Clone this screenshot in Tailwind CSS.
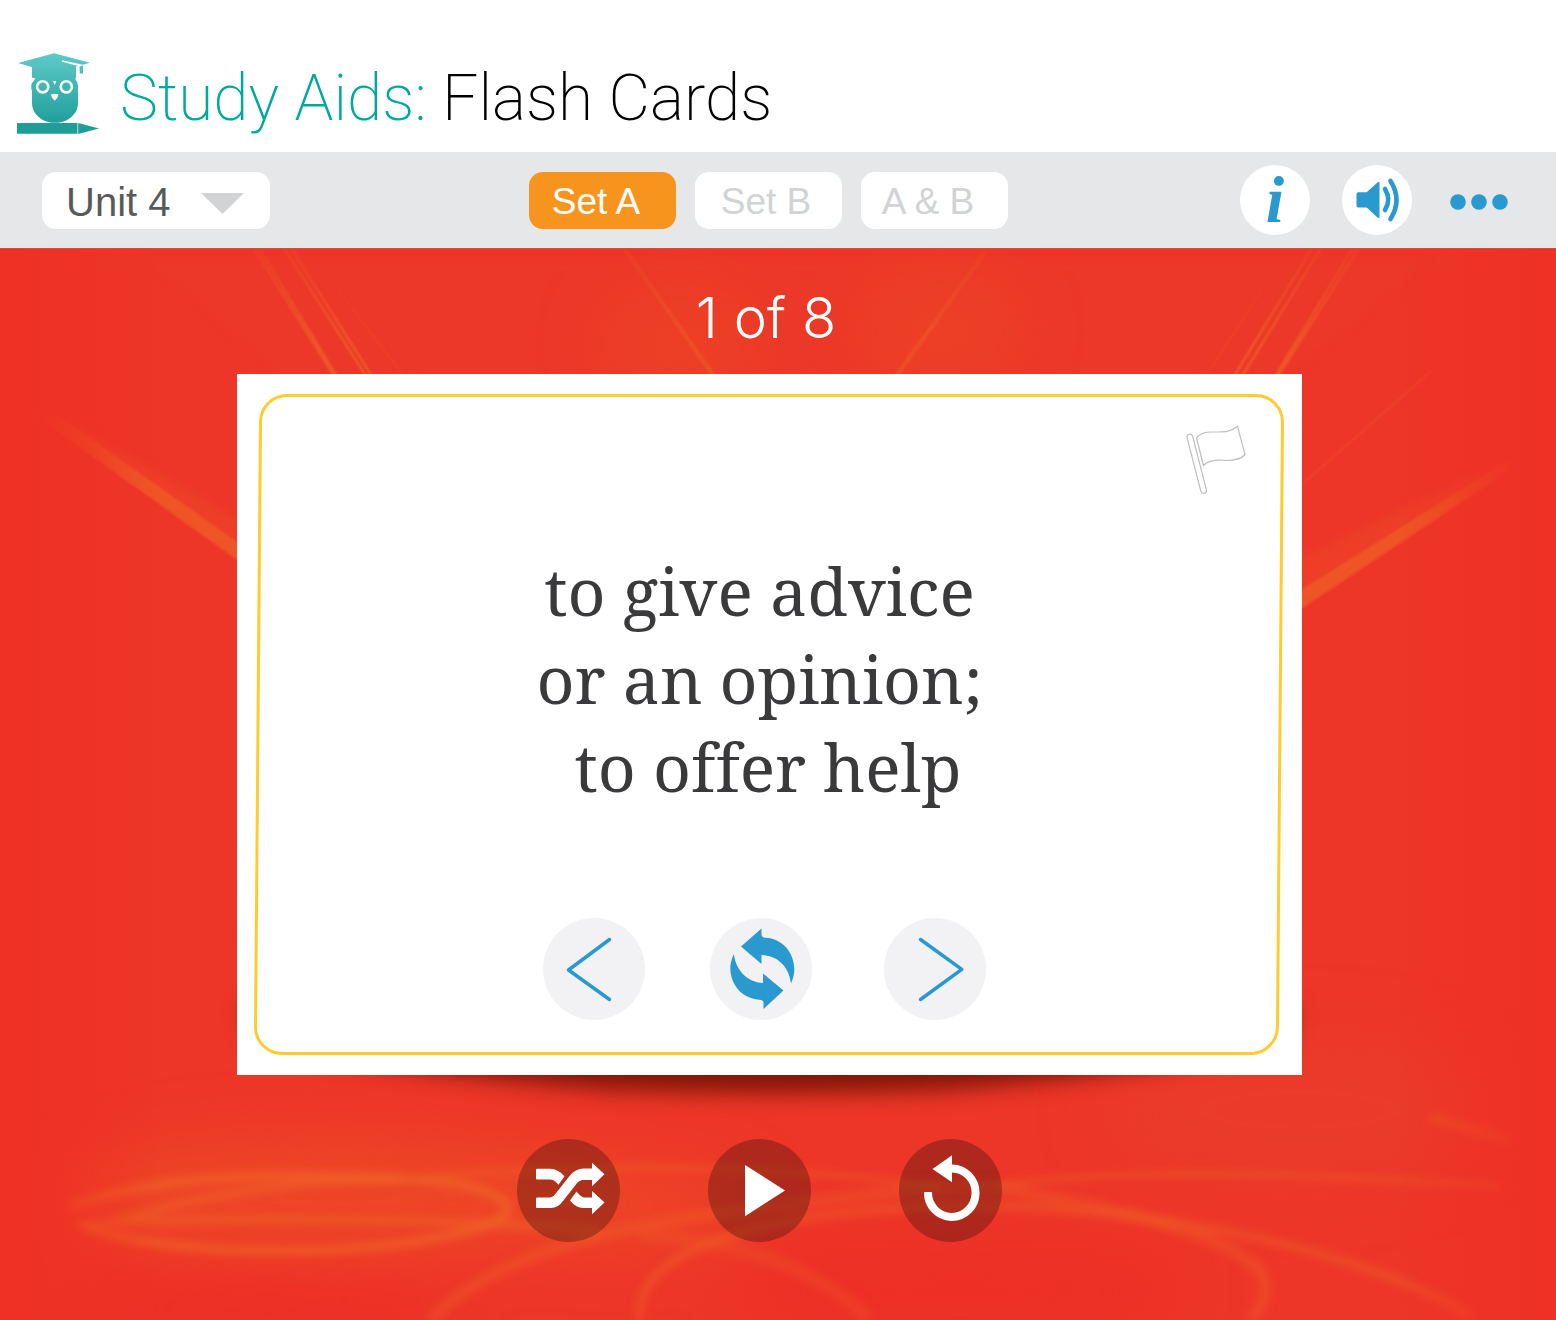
<!DOCTYPE html>
<html lang="en">
<head>
<meta charset="utf-8">
<meta name="viewport" content="width=device-width, initial-scale=1">
<title>Study Aids: Flash Cards</title>
<script src="https://cdn.jsdelivr.net/npm/@tailwindcss/browser@4"></script>
</head>
<body class="flex min-h-screen flex-col bg-white font-['Liberation_Sans',sans-serif]">

<header class="flex h-[152px] shrink-0 items-end gap-5 pl-[17px] pb-[18px]">
  <svg class="h-[81px] w-[83px] shrink-0" viewBox="17 53 83 81" aria-hidden="true">
    <defs><linearGradient id="teal" gradientUnits="userSpaceOnUse" x1="0" y1="53" x2="0" y2="126"><stop offset="0" stop-color="#5ecac9"/><stop offset="1" stop-color="#1f9d99"/></linearGradient></defs>
    <g fill="url(#teal)">
      <path d="M18 63 54 53.300 90 62.700 76 66.500V78l-1 2H33l-1-2V67z"/>
      <path d="M79.500 66.500l3.500-1v8h-3.200z"/>
      <circle cx="42.500" cy="87" r="11.300"/><circle cx="66.800" cy="87" r="11.300"/>
      <path d="M34 78h42l2 14v11c0 11-10 19.800-23 19.800S32 114 32 103V92z"/>
      <path d="M17 123h60.500v10.800H17zM78.200 123l20.800 5.500-20.800 5.400z"/>
    </g>
    <path d="M62 60.200 82 64.500l-2 2-18-4.700z" fill="#fff"/>
    <path d="M31.500 77.500l4 1-4 5zM78.500 77.500l-3.500 1 3.500 5z" fill="#fff"/>
    <circle cx="42.700" cy="86.800" r="5.600" fill="none" stroke="#fff" stroke-width="2.600"/>
    <circle cx="66.300" cy="86.800" r="5.600" fill="none" stroke="#fff" stroke-width="2.600"/>
    <path d="M53 81h3.400l-1.700 4zM50.800 94.500q3.800-1.400 7.800 0-.8 3.500-3.900 6.300-3.100-2.800-3.900-6.300z" fill="#fff"/>
  </svg>
  <h1 class="font-['Roboto',sans-serif] text-[64px] leading-[70px] font-extralight whitespace-nowrap text-black"><span class="text-[#00a99d]">Study Aids:</span> Flash Cards</h1>
</header>

<nav class="grid h-24 shrink-0 grid-cols-[1fr_auto_1fr] items-center bg-[#e6e7e8] pr-12 pl-[42px]" aria-label="Flash card options">
  <div class="relative w-[228px]">
    <select aria-label="Unit" class="h-[57px] w-full appearance-none rounded-[14px] bg-white pt-1 pl-6 text-[40px] leading-[52px] text-[#58595b]">
      <option>Unit 4</option>
    </select>
    <svg class="pointer-events-none absolute top-[21px] right-[26px] h-[21px] w-[43px]" viewBox="0 0 43 21" aria-hidden="true"><path d="M0 0h43L21.500 21z" fill="#d1d3d4"/></svg>
  </div>
  <div class="flex gap-[19px] pr-3.5">
    <button class="h-[57px] w-[147px] rounded-[14px] bg-[#f7941e] pr-3 text-[37px] leading-[59px] text-white" aria-pressed="true">Set A</button>
    <button class="h-[57px] w-[147px] rounded-[14px] bg-white pr-1 text-[37px] leading-[59px] text-[#d1d3d4]">Set B</button>
    <button class="h-[57px] w-[147px] rounded-[14px] bg-white pr-3 text-[37px] leading-[59px] text-[#d1d3d4]">A &amp; B</button>
  </div>
  <div class="flex items-center justify-end gap-8">
    <button class="size-[70px] rounded-full bg-white font-['Liberation_Serif',serif] text-[66px] leading-[70px] font-bold text-[#2a99d0] italic" aria-label="Information">i</button>
    <button class="size-[70px] rounded-full bg-white" aria-label="Sound">
      <svg class="size-[70px]" viewBox="0 0 70 70"><path d="M16.500 27.300h8.200L35.500 17.500q2-1.600 2 .5v33.500q0 2.600-2 1L24.700 42.500h-8.200q-2 0-2-2V29.300q0-2 2-2z" fill="#2a99d0"/><path d="M43 24Q49.500 34.500 43 45M48.500 16q12 19 0 38" fill="none" stroke="#2a99d0" stroke-width="4.600" stroke-linecap="round"/></svg>
    </button>
    <button class="ml-1.5 pt-1" aria-label="More options">
      <svg class="h-4 w-[58px]" viewBox="0 0 58 16"><g fill="#2a99d0"><circle cx="8" cy="8" r="7.800"/><circle cx="29" cy="8" r="7.800"/><circle cx="50" cy="8" r="7.800"/></g></svg>
    </button>
  </div>
</nav>

<main class="relative isolate flex flex-1 flex-col items-center overflow-hidden bg-[#ed3628] px-4 pt-[38px] pb-[78px]">
  <svg class="absolute inset-0 -z-10 h-full w-full" viewBox="0 248 1556 1072" preserveAspectRatio="none" color-interpolation-filters="sRGB" aria-hidden="true">
    <defs>
      <filter id="b1" x="-20%" y="-20%" width="140%" height="140%"><feGaussianBlur stdDeviation="1"/></filter>
      <filter id="b4" x="-20%" y="-50%" width="140%" height="200%"><feGaussianBlur stdDeviation="4"/></filter>
      <filter id="b30" x="-50%" y="-50%" width="200%" height="200%"><feGaussianBlur stdDeviation="30"/></filter>
      <linearGradient id="edge"><stop offset="0" stop-color="#ef3125"/><stop offset=".1" stop-color="#ef3125" stop-opacity="0"/><stop offset=".9" stop-color="#ef3125" stop-opacity="0"/><stop offset="1" stop-color="#ef3125"/></linearGradient>
      <linearGradient id="rayL" gradientUnits="userSpaceOnUse" x1="30" y1="405" x2="130" y2="480"><stop offset="0" stop-color="#f15a29" stop-opacity="0"/><stop offset="1" stop-color="#ef5827"/></linearGradient>
      <linearGradient id="rayR" gradientUnits="userSpaceOnUse" x1="1530" y1="445" x2="1440" y2="508"><stop offset="0" stop-color="#f15a29" stop-opacity="0"/><stop offset="1" stop-color="#ef5827"/></linearGradient>
      <linearGradient id="rayT" gradientUnits="userSpaceOnUse" x1="0" y1="248" x2="0" y2="340"><stop offset="0" stop-color="#f15a29" stop-opacity=".3"/><stop offset="1" stop-color="#f0602a"/></linearGradient>
    </defs>
    <g filter="url(#b30)">
      <ellipse cx="680" cy="345" rx="80" ry="60" fill="#ef4b25" opacity=".6"/>
      <ellipse cx="940" cy="330" rx="80" ry="60" fill="#ef4b25" opacity=".6"/>
      <ellipse cx="340" cy="1195" rx="280" ry="60" fill="#ee4b26" opacity=".75"/>
      <ellipse cx="620" cy="1205" rx="130" ry="45" fill="#ee4b26" opacity=".6"/>
      <ellipse cx="1300" cy="1110" rx="200" ry="80" fill="#ea3d29" opacity=".6"/>
      <ellipse cx="960" cy="1290" rx="220" ry="50" fill="#ee2d26" opacity=".8"/>
      <ellipse cx="250" cy="1310" rx="200" ry="35" fill="#ee2d26" opacity=".8"/>
    </g>
    <path d="M150 260 310 400h950l170-140z" fill="#ea3e29" opacity=".4" filter="url(#b4)"/>
    <g fill="none" stroke="url(#rayT)" filter="url(#b1)">
      <path d="M254 248 334 376M259 248 339 380" stroke-width="2.500" opacity=".75"/>
      <path d="M284 248 366 376M291 248 373 378M1312 248 1233 378M1321 248 1241 378" stroke-width="2"/>
      <path d="M1353 248 1273 380M1359 248 1278 376" stroke-width="2.500" opacity=".75"/>
      <path d="M624 248 718 382M985 252 892 382" stroke-width="4" opacity=".5"/>
      <path d="M338 290 404 376M1262 290 1206 376" stroke-width="1.500" opacity=".25"/>
    </g>
    <path d="M1300 486 1430 372" stroke="#f15a29" stroke-width="2" opacity=".4" filter="url(#b1)"/>
    <path d="M30 412 56 414 240 544v18z" fill="url(#rayL)" opacity=".9" filter="url(#b1)"/>
    <path d="M50 410 240 520v40z" fill="#f15a29" opacity=".25" filter="url(#b4)"/>
    <path d="M1524 450 1298 592v19L1510 470z" fill="url(#rayR)" opacity=".9" filter="url(#b1)"/>
    <path d="M1500 462 1298 560v46z" fill="#f15a29" opacity=".25" filter="url(#b4)"/>
    <g fill="none" stroke="#f26a28" filter="url(#b4)">
      <path d="M70 1206C180 1168 300 1176 385 1178 470 1180 508 1195 508 1210 500 1232 390 1251 280 1251 180 1251 95 1236 80 1222" stroke-width="9" opacity=".6"/>
      <path d="M100 1225C200 1195 300 1178 400 1180M80 1224C220 1217 400 1216 600 1230" stroke-width="8" opacity=".5"/>
      <path d="M430 1320C500 1250 620 1225 760 1208S940 1185 1000 1188C1100 1205 1220 1230 1260 1270 1270 1290 1265 1305 1250 1320" stroke-width="12" opacity=".32"/>
      <path d="M420 1178C600 1160 800 1168 940 1186M1000 1184C1150 1166 1350 1176 1500 1186" stroke-width="5" opacity=".5"/>
      <path d="M640 1320C630 1240 800 1205 990 1206 1170 1210 1360 1250 1470 1315" stroke-width="9" opacity=".4"/>
      <path d="M640 1235C740 1240 820 1270 870 1320" stroke-width="14" opacity=".22"/>
      <path d="M1430 1117 1510 1140" stroke-width="8" opacity=".5"/>
    </g>
    <rect x="0" y="248" width="1556" height="1072" fill="url(#edge)"/>
    <rect x="0" y="248" width="1556" height="1" fill="#e1452f"/>
  </svg>

  <p class="pr-6 font-['Inter',sans-serif] text-[56px] leading-[64px] font-light text-white">1 of 8</p>

  <article class="relative mt-6 mr-[17px] flex h-[701px] w-full max-w-[1065px] flex-col items-center bg-white pt-[172px]">
    <svg class="absolute inset-x-0 top-[620px] -z-10 h-[140px] w-full overflow-visible" viewBox="0 0 1065 140" preserveAspectRatio="none" color-interpolation-filters="sRGB" aria-hidden="true">
      <defs><filter id="sh" x="-20%" y="-60%" width="140%" height="220%"><feGaussianBlur stdDeviation="11"/></filter></defs>
      <path d="M6 15H1059L1045 45Q940 77 700 96 540 102 380 96 140 77 20 45z" fill="#801508" filter="url(#sh)"/>
    </svg>
    <svg class="pointer-events-none absolute inset-0 h-full w-full" viewBox="0 0 1065 701" preserveAspectRatio="none" aria-hidden="true">
      <path d="M50 21.500H1019A26.500 26.500 0 0 1 1045.500 48L1040.500 652.500A27 27 0 0 1 1013.500 679.500H45A26.500 26.500 0 0 1 18.500 653L23.500 48A26.500 26.500 0 0 1 50 21.500z" fill="none" stroke="#ffcb2f" stroke-width="3"/>
    </svg>
    <button class="absolute top-[50px] right-[54px] h-[72px] w-[64px]" aria-label="Flag this card">
      <svg class="h-full w-full" viewBox="1184 424 64 72"><g fill="none" stroke="#bcbec0" stroke-width="1.200"><path d="M1187 437.500a2.900 2.900 0 0 1 5.600-1.400L1206.500 490a2.900 2.900 0 0 1-5.600 1.400z"/><path d="M1196.500 438Q1200 432.500 1210 432c14 0 20 .5 27.500-5.700L1245 454.500q-5 6-19 6-16-1.500-22.500 5z"/></g></svg>
    </button>
    <p class="pr-5 text-center font-['Noto_Serif','Liberation_Serif',serif] text-[66px] leading-[88px] whitespace-nowrap text-[#3a3a3c] [font-variant-ligatures:none]">to give advice<br>or an opinion;<br>&nbsp;to offer help</p>
    <div class="mt-[108px] grid grid-cols-[167px_174px_102px] pr-2.5">
      <button class="size-[102px] rounded-full bg-[#f2f2f4]" aria-label="Previous card">
        <svg class="size-full" viewBox="543 918 102 102"><path d="M609.500 939.500 568.500 970l41 29.500" fill="none" stroke="#2a99d0" stroke-width="3.500" stroke-linecap="round" stroke-linejoin="round"/></svg>
      </button>
      <button class="size-[102px] rounded-full bg-[#f2f2f4]" aria-label="Flip card">
        <svg class="size-full" viewBox="710 918 102 102"><g fill="#2a99d0"><path d="M761.500 928.500v6q0 3 4 3.200C782 938.500 794.500 952 794.300 970q0 6-3.300 13.500C789 966 777 955.500 761.500 955v9L741 946.500z"/><path d="M763.500 1009v-6q0-3-4-3.200C743 999 730.300 985.500 730.300 968q0-6 3.500-14C736 971 748 982.500 763 983v-9.500l20.500 17z"/></g></svg>
      </button>
      <button class="size-[102px] rounded-full bg-[#f2f2f4]" aria-label="Next card">
        <svg class="size-full" viewBox="884 918 102 102"><path d="M920.500 939.500 961.800 969.300 920.500 999.500" fill="none" stroke="#2a99d0" stroke-width="3.500" stroke-linecap="round" stroke-linejoin="round"/></svg>
      </button>
    </div>
  </article>

  <div class="mt-16 flex gap-[88px] pr-[37px]">
    <button class="size-[103px] rounded-full bg-[#3c0f0a]/35" aria-label="Shuffle">
      <svg class="size-full" viewBox="517 1139 103 103"><g fill="#fff"><path d="M537 1168.800h13q8 0 14.500 7.500l-6 8.500q-4-5.300-9-5.300H537q-1 0-1-1v-8.700q0-1 1-1z"/><path d="M537 1197.500h11.500c5 0 6-2.500 10-7.500l11-14q6-7.500 14-7.500h8.500v-5.800l12.500 11.500-12.500 12v-6.200h-8c-5 0-6 2-10 7l-11 14q-5 7-12 7h-14q-1 0-1-1v-8.500q0-1 1-1z"/><path d="M576.500 1191.500q4.500 6 8.500 6h7v-6.500l12.500 11.500-12.500 11.800v-6.300h-9q-7 0-13-7.500z"/></g></svg>
    </button>
    <button class="size-[103px] rounded-full bg-[#3c0f0a]/35" aria-label="Play">
      <svg class="size-full" viewBox="708 1139 103 103"><path d="M745 1165 785 1190.500 745 1216.300z" fill="#fff"/></svg>
    </button>
    <button class="size-[103px] rounded-full bg-[#3c0f0a]/35" aria-label="Restart">
      <svg class="size-full" viewBox="899 1139 103 103"><path d="M928 1192a23.800 24.200 0 1 0 24-23.500" fill="none" stroke="#fff" stroke-width="8"/><path d="M952 1155.300v27L932.500 1169z" fill="#fff"/></svg>
    </button>
  </div>
</main>
</body>
</html>
